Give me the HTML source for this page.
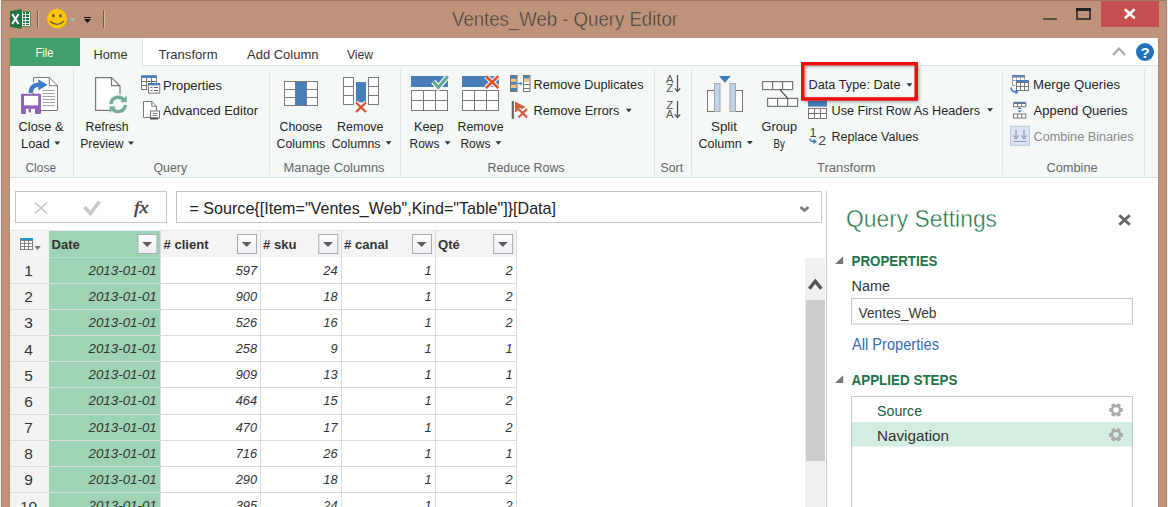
<!DOCTYPE html>
<html><head><meta charset="utf-8"><title>Query Editor</title>
<style>html,body{margin:0;padding:0;width:1168px;height:507px;overflow:hidden;background:#BF9379}
svg{display:block}</style></head>
<body><svg width="1168" height="507" viewBox="0 0 1168 507">
<rect x="0" y="0" width="1168" height="507" fill="#BF9379" />
<rect x="0" y="0" width="1168" height="1" fill="#9C7A64" />
<rect x="0" y="0" width="1" height="507" fill="#F0F0F0" />
<rect x="1" y="0" width="1" height="507" fill="#A8836D" />
<rect x="1166" y="0" width="1" height="507" fill="#A8836D" />
<rect x="1167" y="0" width="1" height="507" fill="#F0F0F0" />
<rect x="9" y="38" width="1" height="469" fill="#AE8A74" />
<rect x="1158" y="38" width="1" height="469" fill="#AE8A74" />
<text x="452.00" y="26.30" font-size="19.48" fill="#3A3A3A" font-weight="normal" font-style="normal" font-family="Liberation Sans" text-anchor="start" textLength="226.00" lengthAdjust="spacingAndGlyphs" stroke="#BF9379" stroke-width="0.5">Ventes_Web - Query Editor</text>
<g>
<rect x="20.5" y="11.5" width="10" height="15" fill="#1F7244"/>
<path d="M22.5 12v14M25.5 12v14M22.5 14.5h7.5M22.5 17.5h7.5M22.5 20.5h7.5M22.5 23.5h7.5M29.5 12v14M22.5 25.5h7.5" stroke="#fff" stroke-width="0.9"/>
<path d="M10 11.2 L21.5 9 L21.5 29 L10 26.8 Z" fill="#1F7244"/>
<path d="M12.2 14 L18.6 24 M18.6 14 L12.2 24" stroke="#fff" stroke-width="2"/>
</g>
<rect x="37" y="10.5" width="1" height="17" fill="#6B5A4E" />
<rect x="38" y="10.5" width="1" height="17" fill="#D2B5A3" />
<circle cx="57" cy="18.7" r="9.9" fill="#FFC700"/><ellipse cx="53.3" cy="15.8" rx="1.2" ry="1.8" fill="#4A4A4A"/><ellipse cx="60.5" cy="15.8" rx="1.2" ry="1.8" fill="#4A4A4A"/><path d="M50 21.3 Q57 27.5 64 21.3" stroke="#555" stroke-width="1.2" fill="none"/>
<path d="M69.8 18.3h5.6l-2.8 3.5z" fill="#8CC7C0"/>
<rect x="84" y="17" width="7" height="1" fill="#111" />
<path d="M84 19h7l-3.5 4z" fill="#111"/>
<rect x="103" y="10.5" width="1" height="17" fill="#6B5A4E" />
<rect x="104" y="10.5" width="1" height="17" fill="#D2B5A3" />
<rect x="1043" y="18" width="14" height="2" fill="#5E5040" />
<rect x="1077" y="9" width="13" height="10" fill="none" stroke="#222" stroke-width="1.5"/><rect x="1076" y="8" width="15" height="3" fill="#222"/>
<rect x="1101" y="1" width="58" height="26" fill="#C74E4E" />
<path d="M1124.8 9.3 L1134.6 18.2 M1134.6 9.3 L1124.8 18.2" stroke="#fff" stroke-width="2.6"/>
<rect x="10" y="38" width="1148" height="28" fill="#FFFFFF" />
<rect x="10" y="65" width="1148" height="1" fill="#D5E4DD" />
<rect x="10" y="38" width="70" height="28" fill="#42A06C" />
<rect x="80" y="38" width="63" height="28" fill="#F4F8F7" />
<rect x="142" y="38" width="1" height="28" fill="#D5E4DD" />
<text x="35.50" y="57.00" font-size="12.94" fill="#FFFFFF" font-weight="normal" font-style="normal" font-family="Liberation Sans" text-anchor="start" textLength="18.00" lengthAdjust="spacingAndGlyphs">File</text>
<text x="93.50" y="58.80" font-size="12.79" fill="#333" font-weight="normal" font-style="normal" font-family="Liberation Sans" text-anchor="start" textLength="34.10" lengthAdjust="spacingAndGlyphs">Home</text>
<text x="158.50" y="58.80" font-size="12.79" fill="#333" font-weight="normal" font-style="normal" font-family="Liberation Sans" text-anchor="start" textLength="59.02" lengthAdjust="spacingAndGlyphs">Transform</text>
<text x="247.00" y="58.80" font-size="12.79" fill="#333" font-weight="normal" font-style="normal" font-family="Liberation Sans" text-anchor="start" textLength="71.52" lengthAdjust="spacingAndGlyphs">Add Column</text>
<text x="347.00" y="58.80" font-size="12.79" fill="#333" font-weight="normal" font-style="normal" font-family="Liberation Sans" text-anchor="start" textLength="26.07" lengthAdjust="spacingAndGlyphs">View</text>
<path d="M1113 55 L1119 48.5 L1125 55" stroke="#A8A8A8" stroke-width="2.2" fill="none"/>
<circle cx="1145" cy="52" r="9" fill="#1E73BE"/><text x="1145" y="57.5" font-size="15" font-weight="bold" fill="#fff" text-anchor="middle" font-family="Liberation Sans">?</text>
<rect x="10" y="66" width="1148" height="112" fill="#F4F8F7" />
<rect x="10" y="177" width="1148" height="1" fill="#D5E4DD" />
<rect x="73" y="70" width="1" height="105" fill="#DDE5E2" />
<rect x="269" y="70" width="1" height="105" fill="#DDE5E2" />
<rect x="400" y="70" width="1" height="105" fill="#DDE5E2" />
<rect x="654" y="70" width="1" height="105" fill="#DDE5E2" />
<rect x="691" y="70" width="1" height="105" fill="#DDE5E2" />
<rect x="1002" y="70" width="1" height="105" fill="#DDE5E2" />
<rect x="1144" y="70" width="1" height="105" fill="#DDE5E2" />
<text x="25.50" y="172.00" font-size="13.08" fill="#666" font-weight="normal" font-style="normal" font-family="Liberation Sans" text-anchor="start" textLength="30.52" lengthAdjust="spacingAndGlyphs">Close</text>
<text x="153.50" y="172.00" font-size="13.08" fill="#666" font-weight="normal" font-style="normal" font-family="Liberation Sans" text-anchor="start" textLength="33.57" lengthAdjust="spacingAndGlyphs">Query</text>
<text x="283.50" y="172.00" font-size="13.08" fill="#666" font-weight="normal" font-style="normal" font-family="Liberation Sans" text-anchor="start" textLength="101.00" lengthAdjust="spacingAndGlyphs">Manage Columns</text>
<text x="487.50" y="172.00" font-size="13.08" fill="#666" font-weight="normal" font-style="normal" font-family="Liberation Sans" text-anchor="start" textLength="77.00" lengthAdjust="spacingAndGlyphs">Reduce Rows</text>
<text x="660.50" y="172.00" font-size="13.08" fill="#666" font-weight="normal" font-style="normal" font-family="Liberation Sans" text-anchor="start" textLength="22.56" lengthAdjust="spacingAndGlyphs">Sort</text>
<text x="817.00" y="172.00" font-size="13.08" fill="#666" font-weight="normal" font-style="normal" font-family="Liberation Sans" text-anchor="start" textLength="58.50" lengthAdjust="spacingAndGlyphs">Transform</text>
<text x="1046.50" y="172.00" font-size="13.08" fill="#666" font-weight="normal" font-style="normal" font-family="Liberation Sans" text-anchor="start" textLength="51.13" lengthAdjust="spacingAndGlyphs">Combine</text>
<text x="18.50" y="131.00" font-size="13.08" fill="#262626" font-weight="normal" font-style="normal" font-family="Liberation Sans" text-anchor="start" textLength="45.05" lengthAdjust="spacingAndGlyphs">Close &amp;</text>
<text x="21.00" y="148.00" font-size="13.08" fill="#262626" font-weight="normal" font-style="normal" font-family="Liberation Sans" text-anchor="start" textLength="28.71" lengthAdjust="spacingAndGlyphs">Load</text>
<path d="M54.400000000000006 141.5h5.8l-2.9 3.5z" fill="#333"/>
<text x="85.50" y="131.00" font-size="13.08" fill="#262626" font-weight="normal" font-style="normal" font-family="Liberation Sans" text-anchor="start" textLength="43.05" lengthAdjust="spacingAndGlyphs">Refresh</text>
<text x="80.20" y="148.00" font-size="13.08" fill="#262626" font-weight="normal" font-style="normal" font-family="Liberation Sans" text-anchor="start" textLength="43.36" lengthAdjust="spacingAndGlyphs">Preview</text>
<path d="M128.1 141.5h5.8l-2.9 3.5z" fill="#333"/>
<text x="279.50" y="131.00" font-size="13.08" fill="#262626" font-weight="normal" font-style="normal" font-family="Liberation Sans" text-anchor="start" textLength="42.53" lengthAdjust="spacingAndGlyphs">Choose</text>
<text x="276.50" y="148.00" font-size="13.08" fill="#262626" font-weight="normal" font-style="normal" font-family="Liberation Sans" text-anchor="start" textLength="48.73" lengthAdjust="spacingAndGlyphs">Columns</text>
<text x="337.00" y="131.00" font-size="13.08" fill="#262626" font-weight="normal" font-style="normal" font-family="Liberation Sans" text-anchor="start" textLength="46.54" lengthAdjust="spacingAndGlyphs">Remove</text>
<text x="331.70" y="148.00" font-size="13.08" fill="#262626" font-weight="normal" font-style="normal" font-family="Liberation Sans" text-anchor="start" textLength="48.81" lengthAdjust="spacingAndGlyphs">Columns</text>
<path d="M385.7 141.3h5.8l-2.9 3.5z" fill="#333"/>
<text x="414.00" y="131.00" font-size="13.08" fill="#262626" font-weight="normal" font-style="normal" font-family="Liberation Sans" text-anchor="start" textLength="29.54" lengthAdjust="spacingAndGlyphs">Keep</text>
<text x="409.60" y="148.00" font-size="13.08" fill="#262626" font-weight="normal" font-style="normal" font-family="Liberation Sans" text-anchor="start" textLength="29.87" lengthAdjust="spacingAndGlyphs">Rows</text>
<path d="M444.7 141.3h5.8l-2.9 3.5z" fill="#333"/>
<text x="457.50" y="131.00" font-size="13.08" fill="#262626" font-weight="normal" font-style="normal" font-family="Liberation Sans" text-anchor="start" textLength="46.00" lengthAdjust="spacingAndGlyphs">Remove</text>
<text x="460.40" y="148.00" font-size="13.08" fill="#262626" font-weight="normal" font-style="normal" font-family="Liberation Sans" text-anchor="start" textLength="30.03" lengthAdjust="spacingAndGlyphs">Rows</text>
<path d="M495.5 141.3h5.8l-2.9 3.5z" fill="#333"/>
<text x="711.00" y="131.00" font-size="13.08" fill="#262626" font-weight="normal" font-style="normal" font-family="Liberation Sans" text-anchor="start" textLength="26.05" lengthAdjust="spacingAndGlyphs">Split</text>
<text x="698.40" y="148.00" font-size="13.08" fill="#262626" font-weight="normal" font-style="normal" font-family="Liberation Sans" text-anchor="start" textLength="43.26" lengthAdjust="spacingAndGlyphs">Column</text>
<path d="M747.0 141.0h5.8l-2.9 3.5z" fill="#333"/>
<text x="761.50" y="131.00" font-size="13.08" fill="#262626" font-weight="normal" font-style="normal" font-family="Liberation Sans" text-anchor="start" textLength="35.53" lengthAdjust="spacingAndGlyphs">Group</text>
<text x="773.50" y="148.00" font-size="13.08" fill="#262626" font-weight="normal" font-style="normal" font-family="Liberation Sans" text-anchor="start" textLength="11.36" lengthAdjust="spacingAndGlyphs">By</text>
<text x="163.00" y="89.50" font-size="13.08" fill="#262626" font-weight="normal" font-style="normal" font-family="Liberation Sans" text-anchor="start" textLength="59.01" lengthAdjust="spacingAndGlyphs">Properties</text>
<text x="163.00" y="115.20" font-size="13.08" fill="#262626" font-weight="normal" font-style="normal" font-family="Liberation Sans" text-anchor="start" textLength="95.02" lengthAdjust="spacingAndGlyphs">Advanced Editor</text>
<text x="533.50" y="88.80" font-size="13.08" fill="#262626" font-weight="normal" font-style="normal" font-family="Liberation Sans" text-anchor="start" textLength="110.00" lengthAdjust="spacingAndGlyphs">Remove Duplicates</text>
<text x="533.50" y="114.50" font-size="13.08" fill="#262626" font-weight="normal" font-style="normal" font-family="Liberation Sans" text-anchor="start" textLength="86.02" lengthAdjust="spacingAndGlyphs">Remove Errors</text>
<path d="M625.9000000000001 108.7h5.8l-2.9 3.5z" fill="#333"/>
<text x="808.50" y="88.60" font-size="13.08" fill="#262626" font-weight="normal" font-style="normal" font-family="Liberation Sans" text-anchor="start" textLength="92.01" lengthAdjust="spacingAndGlyphs">Data Type: Date</text>
<path d="M906.5 83.3h5.8l-2.9 3.5z" fill="#333"/>
<text x="831.50" y="114.60" font-size="13.08" fill="#262626" font-weight="normal" font-style="normal" font-family="Liberation Sans" text-anchor="start" textLength="148.50" lengthAdjust="spacingAndGlyphs">Use First Row As Headers</text>
<path d="M987.2 108.3h5.8l-2.9 3.5z" fill="#333"/>
<text x="831.50" y="140.50" font-size="13.08" fill="#262626" font-weight="normal" font-style="normal" font-family="Liberation Sans" text-anchor="start" textLength="87.02" lengthAdjust="spacingAndGlyphs">Replace Values</text>
<text x="1033.00" y="89.10" font-size="13.08" fill="#262626" font-weight="normal" font-style="normal" font-family="Liberation Sans" text-anchor="start" textLength="87.03" lengthAdjust="spacingAndGlyphs">Merge Queries</text>
<text x="1033.50" y="114.80" font-size="13.08" fill="#262626" font-weight="normal" font-style="normal" font-family="Liberation Sans" text-anchor="start" textLength="94.01" lengthAdjust="spacingAndGlyphs">Append Queries</text>
<text x="1033.50" y="140.60" font-size="13.08" fill="#8A8A8A" font-weight="normal" font-style="normal" font-family="Liberation Sans" text-anchor="start" textLength="100.00" lengthAdjust="spacingAndGlyphs">Combine Binaries</text>
<rect x="10" y="178" width="1148" height="329" fill="#FFFFFF" />
<rect x="15.5" y="191.5" width="151" height="31" fill="#fff" stroke="#C6C6C6"/>
<rect x="176.5" y="191.5" width="645" height="31" fill="#fff" stroke="#C6C6C6"/>
<path d="M35 202.5 L47 213.5 M47 202.5 L35 213.5" stroke="#C4C4C4" stroke-width="1.5"/>
<path d="M84.5 207 L90.5 213.5 L99.5 201.5" stroke="#C8C8C8" stroke-width="3.5" fill="none"/>
<text x="134.00" y="213.00" font-size="16.00" fill="#3C3C3C" font-weight="normal" font-style="italic" font-family="Liberation Serif" text-anchor="start" textLength="14.40" lengthAdjust="spacingAndGlyphs" stroke="#3C3C3C" stroke-width="0.35">fx</text>
<text x="189.50" y="214.00" font-size="15.70" fill="#222" font-weight="normal" font-style="normal" font-family="Liberation Sans" text-anchor="start" textLength="366.50" lengthAdjust="spacingAndGlyphs">= Source{[Item=&quot;Ventes_Web&quot;,Kind=&quot;Table&quot;]}[Data]</text>
<path d="M800.5 207 L804.5 210.5 L808.5 207" stroke="#777" stroke-width="2.5" fill="none"/>
<rect x="826" y="191" width="1" height="316" fill="#C8C8C8" />
<rect x="10" y="230" width="506" height="27" fill="#F4F4F4" />
<rect x="49" y="230" width="111" height="277" fill="#9ED4B5" />
<rect x="10" y="257" width="39" height="250" fill="#F3F3F3" />
<rect x="10" y="230" width="506" height="1" fill="#E6E6E6" />
<rect x="160" y="230" width="1" height="277" fill="#DCDCDC" />
<rect x="260" y="230" width="1" height="277" fill="#DCDCDC" />
<rect x="341" y="230" width="1" height="277" fill="#DCDCDC" />
<rect x="435" y="230" width="1" height="277" fill="#DCDCDC" />
<rect x="516" y="230" width="1" height="277" fill="#DCDCDC" />
<rect x="516" y="230" width="1" height="277" fill="#DCDCDC" />
<rect x="10" y="283" width="506" height="1" fill="#DCDCDC" />
<text x="28.50" y="276.00" font-size="15.50" fill="#333" font-weight="normal" font-style="normal" font-family="Liberation Sans" text-anchor="middle">1</text>
<text x="156.80" y="274.50" font-size="12.79" fill="#333" font-weight="normal" font-style="italic" font-family="Liberation Sans" text-anchor="end" textLength="68.30" lengthAdjust="spacingAndGlyphs">2013-01-01</text>
<text x="257.00" y="274.50" font-size="12.79" fill="#333" font-weight="normal" font-style="italic" font-family="Liberation Sans" text-anchor="end">597</text>
<text x="337.50" y="274.50" font-size="12.79" fill="#333" font-weight="normal" font-style="italic" font-family="Liberation Sans" text-anchor="end">24</text>
<text x="431.50" y="274.50" font-size="12.79" fill="#333" font-weight="normal" font-style="italic" font-family="Liberation Sans" text-anchor="end">1</text>
<text x="512.50" y="274.50" font-size="12.79" fill="#333" font-weight="normal" font-style="italic" font-family="Liberation Sans" text-anchor="end">2</text>
<rect x="10" y="309" width="506" height="1" fill="#DCDCDC" />
<text x="28.50" y="302.17" font-size="15.50" fill="#333" font-weight="normal" font-style="normal" font-family="Liberation Sans" text-anchor="middle">2</text>
<text x="156.80" y="300.67" font-size="12.79" fill="#333" font-weight="normal" font-style="italic" font-family="Liberation Sans" text-anchor="end" textLength="68.30" lengthAdjust="spacingAndGlyphs">2013-01-01</text>
<text x="257.00" y="300.67" font-size="12.79" fill="#333" font-weight="normal" font-style="italic" font-family="Liberation Sans" text-anchor="end">900</text>
<text x="337.50" y="300.67" font-size="12.79" fill="#333" font-weight="normal" font-style="italic" font-family="Liberation Sans" text-anchor="end">18</text>
<text x="431.50" y="300.67" font-size="12.79" fill="#333" font-weight="normal" font-style="italic" font-family="Liberation Sans" text-anchor="end">1</text>
<text x="512.50" y="300.67" font-size="12.79" fill="#333" font-weight="normal" font-style="italic" font-family="Liberation Sans" text-anchor="end">2</text>
<rect x="10" y="335" width="506" height="1" fill="#DCDCDC" />
<text x="28.50" y="328.34" font-size="15.50" fill="#333" font-weight="normal" font-style="normal" font-family="Liberation Sans" text-anchor="middle">3</text>
<text x="156.80" y="326.84" font-size="12.79" fill="#333" font-weight="normal" font-style="italic" font-family="Liberation Sans" text-anchor="end" textLength="68.30" lengthAdjust="spacingAndGlyphs">2013-01-01</text>
<text x="257.00" y="326.84" font-size="12.79" fill="#333" font-weight="normal" font-style="italic" font-family="Liberation Sans" text-anchor="end">526</text>
<text x="337.50" y="326.84" font-size="12.79" fill="#333" font-weight="normal" font-style="italic" font-family="Liberation Sans" text-anchor="end">16</text>
<text x="431.50" y="326.84" font-size="12.79" fill="#333" font-weight="normal" font-style="italic" font-family="Liberation Sans" text-anchor="end">1</text>
<text x="512.50" y="326.84" font-size="12.79" fill="#333" font-weight="normal" font-style="italic" font-family="Liberation Sans" text-anchor="end">2</text>
<rect x="10" y="361" width="506" height="1" fill="#DCDCDC" />
<text x="28.50" y="354.51" font-size="15.50" fill="#333" font-weight="normal" font-style="normal" font-family="Liberation Sans" text-anchor="middle">4</text>
<text x="156.80" y="353.01" font-size="12.79" fill="#333" font-weight="normal" font-style="italic" font-family="Liberation Sans" text-anchor="end" textLength="68.30" lengthAdjust="spacingAndGlyphs">2013-01-01</text>
<text x="257.00" y="353.01" font-size="12.79" fill="#333" font-weight="normal" font-style="italic" font-family="Liberation Sans" text-anchor="end">258</text>
<text x="337.50" y="353.01" font-size="12.79" fill="#333" font-weight="normal" font-style="italic" font-family="Liberation Sans" text-anchor="end">9</text>
<text x="431.50" y="353.01" font-size="12.79" fill="#333" font-weight="normal" font-style="italic" font-family="Liberation Sans" text-anchor="end">1</text>
<text x="512.50" y="353.01" font-size="12.79" fill="#333" font-weight="normal" font-style="italic" font-family="Liberation Sans" text-anchor="end">1</text>
<rect x="10" y="387" width="506" height="1" fill="#DCDCDC" />
<text x="28.50" y="380.68" font-size="15.50" fill="#333" font-weight="normal" font-style="normal" font-family="Liberation Sans" text-anchor="middle">5</text>
<text x="156.80" y="379.18" font-size="12.79" fill="#333" font-weight="normal" font-style="italic" font-family="Liberation Sans" text-anchor="end" textLength="68.30" lengthAdjust="spacingAndGlyphs">2013-01-01</text>
<text x="257.00" y="379.18" font-size="12.79" fill="#333" font-weight="normal" font-style="italic" font-family="Liberation Sans" text-anchor="end">909</text>
<text x="337.50" y="379.18" font-size="12.79" fill="#333" font-weight="normal" font-style="italic" font-family="Liberation Sans" text-anchor="end">13</text>
<text x="431.50" y="379.18" font-size="12.79" fill="#333" font-weight="normal" font-style="italic" font-family="Liberation Sans" text-anchor="end">1</text>
<text x="512.50" y="379.18" font-size="12.79" fill="#333" font-weight="normal" font-style="italic" font-family="Liberation Sans" text-anchor="end">1</text>
<rect x="10" y="414" width="506" height="1" fill="#DCDCDC" />
<text x="28.50" y="406.85" font-size="15.50" fill="#333" font-weight="normal" font-style="normal" font-family="Liberation Sans" text-anchor="middle">6</text>
<text x="156.80" y="405.35" font-size="12.79" fill="#333" font-weight="normal" font-style="italic" font-family="Liberation Sans" text-anchor="end" textLength="68.30" lengthAdjust="spacingAndGlyphs">2013-01-01</text>
<text x="257.00" y="405.35" font-size="12.79" fill="#333" font-weight="normal" font-style="italic" font-family="Liberation Sans" text-anchor="end">464</text>
<text x="337.50" y="405.35" font-size="12.79" fill="#333" font-weight="normal" font-style="italic" font-family="Liberation Sans" text-anchor="end">15</text>
<text x="431.50" y="405.35" font-size="12.79" fill="#333" font-weight="normal" font-style="italic" font-family="Liberation Sans" text-anchor="end">1</text>
<text x="512.50" y="405.35" font-size="12.79" fill="#333" font-weight="normal" font-style="italic" font-family="Liberation Sans" text-anchor="end">2</text>
<rect x="10" y="440" width="506" height="1" fill="#DCDCDC" />
<text x="28.50" y="433.02" font-size="15.50" fill="#333" font-weight="normal" font-style="normal" font-family="Liberation Sans" text-anchor="middle">7</text>
<text x="156.80" y="431.52" font-size="12.79" fill="#333" font-weight="normal" font-style="italic" font-family="Liberation Sans" text-anchor="end" textLength="68.30" lengthAdjust="spacingAndGlyphs">2013-01-01</text>
<text x="257.00" y="431.52" font-size="12.79" fill="#333" font-weight="normal" font-style="italic" font-family="Liberation Sans" text-anchor="end">470</text>
<text x="337.50" y="431.52" font-size="12.79" fill="#333" font-weight="normal" font-style="italic" font-family="Liberation Sans" text-anchor="end">17</text>
<text x="431.50" y="431.52" font-size="12.79" fill="#333" font-weight="normal" font-style="italic" font-family="Liberation Sans" text-anchor="end">1</text>
<text x="512.50" y="431.52" font-size="12.79" fill="#333" font-weight="normal" font-style="italic" font-family="Liberation Sans" text-anchor="end">2</text>
<rect x="10" y="466" width="506" height="1" fill="#DCDCDC" />
<text x="28.50" y="459.19" font-size="15.50" fill="#333" font-weight="normal" font-style="normal" font-family="Liberation Sans" text-anchor="middle">8</text>
<text x="156.80" y="457.69" font-size="12.79" fill="#333" font-weight="normal" font-style="italic" font-family="Liberation Sans" text-anchor="end" textLength="68.30" lengthAdjust="spacingAndGlyphs">2013-01-01</text>
<text x="257.00" y="457.69" font-size="12.79" fill="#333" font-weight="normal" font-style="italic" font-family="Liberation Sans" text-anchor="end">716</text>
<text x="337.50" y="457.69" font-size="12.79" fill="#333" font-weight="normal" font-style="italic" font-family="Liberation Sans" text-anchor="end">26</text>
<text x="431.50" y="457.69" font-size="12.79" fill="#333" font-weight="normal" font-style="italic" font-family="Liberation Sans" text-anchor="end">1</text>
<text x="512.50" y="457.69" font-size="12.79" fill="#333" font-weight="normal" font-style="italic" font-family="Liberation Sans" text-anchor="end">1</text>
<rect x="10" y="492" width="506" height="1" fill="#DCDCDC" />
<text x="28.50" y="485.36" font-size="15.50" fill="#333" font-weight="normal" font-style="normal" font-family="Liberation Sans" text-anchor="middle">9</text>
<text x="156.80" y="483.86" font-size="12.79" fill="#333" font-weight="normal" font-style="italic" font-family="Liberation Sans" text-anchor="end" textLength="68.30" lengthAdjust="spacingAndGlyphs">2013-01-01</text>
<text x="257.00" y="483.86" font-size="12.79" fill="#333" font-weight="normal" font-style="italic" font-family="Liberation Sans" text-anchor="end">290</text>
<text x="337.50" y="483.86" font-size="12.79" fill="#333" font-weight="normal" font-style="italic" font-family="Liberation Sans" text-anchor="end">18</text>
<text x="431.50" y="483.86" font-size="12.79" fill="#333" font-weight="normal" font-style="italic" font-family="Liberation Sans" text-anchor="end">1</text>
<text x="512.50" y="483.86" font-size="12.79" fill="#333" font-weight="normal" font-style="italic" font-family="Liberation Sans" text-anchor="end">2</text>
<text x="28.50" y="511.53" font-size="15.50" fill="#333" font-weight="normal" font-style="normal" font-family="Liberation Sans" text-anchor="middle">10</text>
<text x="156.80" y="510.03" font-size="12.79" fill="#333" font-weight="normal" font-style="italic" font-family="Liberation Sans" text-anchor="end" textLength="68.30" lengthAdjust="spacingAndGlyphs">2013-01-01</text>
<text x="257.00" y="510.03" font-size="12.79" fill="#333" font-weight="normal" font-style="italic" font-family="Liberation Sans" text-anchor="end">395</text>
<text x="337.50" y="510.03" font-size="12.79" fill="#333" font-weight="normal" font-style="italic" font-family="Liberation Sans" text-anchor="end">24</text>
<text x="431.50" y="510.03" font-size="12.79" fill="#333" font-weight="normal" font-style="italic" font-family="Liberation Sans" text-anchor="end">1</text>
<text x="512.50" y="510.03" font-size="12.79" fill="#333" font-weight="normal" font-style="italic" font-family="Liberation Sans" text-anchor="end">2</text>
<defs><linearGradient id="fb" x1="0" y1="0" x2="0" y2="1"><stop offset="0" stop-color="#FFFFFF"/><stop offset="1" stop-color="#ECEFF5"/></linearGradient></defs>
<rect x="49" y="257" width="111" height="1" fill="#B4DEC6" />
<text x="51.50" y="249.00" font-size="13.08" fill="#333" font-weight="bold" font-style="normal" font-family="Liberation Sans" text-anchor="start">Date</text>
<rect x="138.0" y="234.5" width="19" height="19" fill="url(#fb)" stroke="#A9A9B5"/>
<path d="M142.3 242.1h9.8l-4.9 5z" fill="#5E5E5E"/>
<text x="163.50" y="249.00" font-size="13.08" fill="#333" font-weight="bold" font-style="normal" font-family="Liberation Sans" text-anchor="start"># client</text>
<rect x="237.5" y="234.5" width="19" height="19" fill="url(#fb)" stroke="#A9A9B5"/>
<path d="M241.8 242.1h9.8l-4.9 5z" fill="#5E5E5E"/>
<text x="263.00" y="249.00" font-size="13.08" fill="#333" font-weight="bold" font-style="normal" font-family="Liberation Sans" text-anchor="start"># sku</text>
<rect x="318.8" y="234.5" width="19" height="19" fill="url(#fb)" stroke="#A9A9B5"/>
<path d="M323.1 242.1h9.8l-4.9 5z" fill="#5E5E5E"/>
<text x="344.00" y="249.00" font-size="13.08" fill="#333" font-weight="bold" font-style="normal" font-family="Liberation Sans" text-anchor="start"># canal</text>
<rect x="412.5" y="234.5" width="19" height="19" fill="url(#fb)" stroke="#A9A9B5"/>
<path d="M416.8 242.1h9.8l-4.9 5z" fill="#5E5E5E"/>
<text x="438.00" y="249.00" font-size="13.08" fill="#333" font-weight="bold" font-style="normal" font-family="Liberation Sans" text-anchor="start">Qté</text>
<rect x="493.7" y="234.5" width="19" height="19" fill="url(#fb)" stroke="#A9A9B5"/>
<path d="M498.0 242.1h9.8l-4.9 5z" fill="#5E5E5E"/>
<g><rect x="20" y="238" width="13" height="2.3" fill="#1E96C8"/><rect x="20.5" y="240.5" width="12" height="9" fill="#fff" stroke="#808080"/><path d="M24.5 240.5v9M28.5 240.5v9M20.5 243.5h12M20.5 246.5h12" stroke="#808080"/><path d="M34.3 246h6.5l-3.25 3.9z" fill="#777"/></g>
<rect x="805" y="258" width="20" height="249" fill="#F0F0F0" />
<rect x="806" y="300" width="19" height="161" fill="#CDCDCD" />
<path d="M809.3 288.8 L815.3 281.3 L821.3 288.8" stroke="#555" stroke-width="3.4" fill="none"/>
<text x="846.00" y="226.50" font-size="24.00" fill="#217346" font-weight="normal" font-style="normal" font-family="Liberation Sans" text-anchor="start" textLength="151.00" lengthAdjust="spacingAndGlyphs" stroke="#fff" stroke-width="0.45">Query Settings</text>
<path d="M1119.3 215.2 L1129.8 224.8 M1129.8 215.2 L1119.3 224.8" stroke="#636363" stroke-width="2.9"/>
<path d="M843.2 256.2 V264 H835 Z" fill="#777"/>
<text x="851.50" y="266.00" font-size="14.97" fill="#217346" font-weight="bold" font-style="normal" font-family="Liberation Sans" text-anchor="start" textLength="86.01" lengthAdjust="spacingAndGlyphs">PROPERTIES</text>
<text x="851.50" y="291.00" font-size="15.26" fill="#333" font-weight="normal" font-style="normal" font-family="Liberation Sans" text-anchor="start" textLength="38.50" lengthAdjust="spacingAndGlyphs">Name</text>
<rect x="851.5" y="298.5" width="281" height="25.5" fill="#fff" stroke="#C6C6C6"/>
<text x="858.50" y="318.00" font-size="15.26" fill="#3A3A3A" font-weight="normal" font-style="normal" font-family="Liberation Sans" text-anchor="start" textLength="78.02" lengthAdjust="spacingAndGlyphs">Ventes_Web</text>
<text x="852.00" y="349.80" font-size="15.70" fill="#3B6CB2" font-weight="normal" font-style="normal" font-family="Liberation Sans" text-anchor="start" textLength="87.01" lengthAdjust="spacingAndGlyphs">All Properties</text>
<path d="M843.2 375.2 V383 H835 Z" fill="#777"/>
<text x="851.50" y="385.00" font-size="14.97" fill="#217346" font-weight="bold" font-style="normal" font-family="Liberation Sans" text-anchor="start" textLength="106.00" lengthAdjust="spacingAndGlyphs">APPLIED STEPS</text>
<rect x="851.5" y="396.5" width="281" height="120" fill="#fff" stroke="#C6C6C6"/>
<rect x="852" y="422" width="280" height="24.5" fill="#D3EDE0" />
<text x="877.00" y="416.20" font-size="15.26" fill="#1B603B" font-weight="normal" font-style="normal" font-family="Liberation Sans" text-anchor="start" textLength="45.05" lengthAdjust="spacingAndGlyphs">Source</text>
<text x="877.00" y="441.00" font-size="15.26" fill="#333" font-weight="normal" font-style="normal" font-family="Liberation Sans" text-anchor="start" textLength="72.03" lengthAdjust="spacingAndGlyphs">Navigation</text>
<polygon points="1120.41,412.35 1122.92,411.60 1122.92,408.40 1120.41,407.65 1120.24,407.35 1120.84,404.81 1118.08,403.21 1116.17,405.00 1115.83,405.00 1113.92,403.21 1111.16,404.81 1111.76,407.35 1111.59,407.65 1109.08,408.40 1109.08,411.60 1111.59,412.35 1111.76,412.65 1111.16,415.19 1113.92,416.79 1115.83,415.00 1116.17,415.00 1118.08,416.79 1120.84,415.19 1120.24,412.65" fill="#ABABAB"/><circle cx="1116" cy="410" r="2.7" fill="#fff"/>
<polygon points="1120.41,437.15 1122.92,436.40 1122.92,433.20 1120.41,432.45 1120.24,432.15 1120.84,429.61 1118.08,428.01 1116.17,429.80 1115.83,429.80 1113.92,428.01 1111.16,429.61 1111.76,432.15 1111.59,432.45 1109.08,433.20 1109.08,436.40 1111.59,437.15 1111.76,437.45 1111.16,439.99 1113.92,441.59 1115.83,439.80 1116.17,439.80 1118.08,441.59 1120.84,439.99 1120.24,437.45" fill="#ABABAB"/><circle cx="1116" cy="434.8" r="2.7" fill="#D3EDE0"/>
<!-- Close & Load -->
<g>
<path d="M33.5 77.5 H49.3 L57.5 85.7 V110.5 H33.5 Z" fill="#fff" stroke="#7A7A7A" stroke-width="1"/>
<path d="M49.3 77.5 V85.7 H57.5" fill="none" stroke="#7A7A7A" stroke-width="1"/>
<path d="M42.5 90.5h12.5M42.5 93.5h12.5M42.5 96.5h12.5M42.5 99.5h12.5M42.5 102.5h12.5M42.5 105.5h12.5" stroke="#A5A5A5" stroke-width="1"/>
<path d="M30.8 93 C30.8 87.5 33.5 84.6 39.5 84.6" fill="none" stroke="#fff" stroke-width="6.5"/>
<path d="M38 78 L49 84.7 L38 91.8 Z" fill="#fff"/>
<path d="M30.8 93 C30.8 87.5 33.5 84.6 39.5 84.6" fill="none" stroke="#3F7BC0" stroke-width="4.2"/>
<path d="M38.3 79.5 L47.6 84.7 L38.3 90.5 Z" fill="#3F7BC0"/>
<rect x="21" y="93.8" width="20" height="20.2" rx="1.2" fill="#9061B7"/>
<rect x="24" y="95.8" width="14.2" height="9.6" fill="#fff"/>
<rect x="25.8" y="108.8" width="9.2" height="5.2" fill="#fff"/>
<rect x="28.7" y="108.8" width="2.3" height="3.6" fill="#9061B7"/>
</g>
<!-- Refresh Preview -->
<g>
<path d="M95.6 77.6 H111.5 L120 86 V110.4 H95.6 Z" fill="#fff" stroke="#777" stroke-width="1.2"/>
<path d="M111.5 77.6 V85.7 H120" fill="none" stroke="#777" stroke-width="1.2"/>
<circle cx="118.2" cy="104.5" r="10.5" fill="#F4F8F7"/>
<path d="M111 104 A7.2 7.2 0 0 1 124.5 101" fill="none" stroke="#72AC96" stroke-width="3.4"/>
<path d="M120.3 102.3 L126.8 102.3 L126.8 95.5 Z" fill="#72AC96"/>
<path d="M125.4 105 A7.2 7.2 0 0 1 112 108" fill="none" stroke="#72AC96" stroke-width="3.4"/>
<path d="M109.5 106.5 L116 106.5 L109.5 113 Z" fill="#72AC96"/>
</g>
<!-- Properties -->
<g>
<rect x="141" y="75.2" width="16" height="2.8" fill="#4A7EBB"/>
<path d="M141.5 78 V89.5 H156.5 V78" fill="#fff" stroke="#777"/>
<path d="M146.5 78v11.5M151.5 78v11.5M141.5 81.5h15M141.5 85.5h15" stroke="#777"/>
<rect x="147.5" y="83" width="12.7" height="10.7" fill="#F4F8F7"/>
<rect x="148" y="83" width="12.2" height="2.6" fill="#4A7EBB"/>
<path d="M148.5 85.6 V93.2 H159.7 V85.6" fill="#fff" stroke="#777"/>
<path d="M150.5 87.5h2M154 87.5h4M150.5 90.5h2M154 90.5h4" stroke="#666" stroke-width="1.2"/>
</g>
<!-- Advanced Editor -->
<g>
<path d="M143.5 101.5 H151.8 L156.5 106.2 V117.5 H143.5 Z" fill="#fff" stroke="#777"/>
<path d="M151.8 101.5 V106.2 H156.5" fill="none" stroke="#777"/>
<rect x="150.5" y="111" width="9" height="7" fill="#fff" stroke="#777"/>
<path d="M152.5 113.5h5M152.5 115.5h5" stroke="#888"/>
<rect x="150" y="117.5" width="8" height="2" fill="#555"/>
</g>
<!-- Choose Columns -->
<g>
<rect x="284.5" y="81.5" width="33" height="24" fill="#fff" stroke="#7A7A7A"/>
<rect x="295.5" y="81.5" width="11" height="24" fill="#4A7EBB" stroke="#7A7A7A"/>
<path d="M284.5 89.5h11M306.5 89.5h11M284.5 97.5h11M306.5 97.5h11" stroke="#7A7A7A"/>
</g>
<!-- Remove Columns -->
<g>
<rect x="343.5" y="77.5" width="10" height="27" fill="#fff" stroke="#7A7A7A"/>
<path d="M343.5 86.5h10M343.5 95.5h10" stroke="#7A7A7A"/>
<rect x="368.5" y="77.5" width="10" height="27" fill="#fff" stroke="#7A7A7A"/>
<path d="M368.5 86.5h10M368.5 95.5h10" stroke="#7A7A7A"/>
<rect x="356" y="82" width="10" height="20.5" fill="#4A7EBB"/>
<path d="M356 102.5 L366 112 M366 102.5 L356 112" stroke="#F4F8F7" stroke-width="4.5"/>
<path d="M356 102.5 L366 112 M366 102.5 L356 112" stroke="#D9532E" stroke-width="2.4"/>
</g>
<!-- Keep Rows -->
<g>
<rect x="411" y="76" width="37" height="11" fill="#4A7EBB"/>
<rect x="411.5" y="90.5" width="36" height="20" fill="#fff" stroke="#7A7A7A"/>
<path d="M423.5 90.5v20M435.5 90.5v20M411.5 100.5h36" stroke="#7A7A7A"/>
<path d="M433.3 81.5 L438.3 87.5 L447.8 76.3" fill="none" stroke="#F4F8F7" stroke-width="5.5"/>
<path d="M433.3 81.5 L438.3 87.5 L447.8 76.3" fill="none" stroke="#5FA88A" stroke-width="3"/>
</g>
<!-- Remove Rows -->
<g>
<rect x="462" y="76" width="37" height="11" fill="#4A7EBB"/>
<rect x="462.5" y="90.5" width="36" height="20" fill="#fff" stroke="#7A7A7A"/>
<path d="M474.5 90.5v20M486.5 90.5v20M462.5 100.5h36" stroke="#7A7A7A"/>
<path d="M486 76.3 L498.3 88 M498.3 76.3 L486 88" stroke="#F4F8F7" stroke-width="5"/>
<path d="M486 76.3 L498.3 88 M498.3 76.3 L486 88" stroke="#D9532E" stroke-width="2.6"/>
</g>
<!-- Remove Duplicates -->
<g>
<rect x="510.5" y="75.5" width="6.5" height="16" fill="#4A7EBB" stroke="#777"/>
<rect x="511" y="78.7" width="5.5" height="3.2" fill="#F1C37D"/>
<rect x="511" y="84.6" width="5.5" height="3.4" fill="#F1C37D"/>
<rect x="523.5" y="75.5" width="6.5" height="16" fill="#fff" stroke="#777"/>
<rect x="524" y="76" width="5.5" height="2.7" fill="#4A7EBB"/>
<rect x="524" y="78.7" width="5.5" height="3.2" fill="#F1C37D"/>
<path d="M523.5 84.5h6.5M523.5 88.5h6.5" stroke="#777"/>
<path d="M518 83.5h3.5" stroke="#4A7EBB" stroke-width="1.3"/><path d="M520.5 81.5 L522.5 83.5 L520.5 85.5Z" fill="#4A7EBB"/>
</g>
<!-- Remove Errors -->
<g>
<rect x="511.7" y="101.1" width="2.2" height="17.8" fill="#666"/>
<path d="M515 101.6 L525.5 107 L515 112.3 Z" fill="#DA5A36"/>
<path d="M518.5 109 L527 117.5 M527 109 L518.5 117.5" stroke="#F4F8F7" stroke-width="4"/>
<path d="M518.5 109 L527 117.5 M527 109 L518.5 117.5" stroke="#DA5A36" stroke-width="2.2"/>
</g>
<!-- Sort -->
<g fill="#555" font-family="Liberation Sans" font-size="11">
<text x="666" y="82.8" textLength="7.5" lengthAdjust="spacingAndGlyphs">A</text>
<text x="666.3" y="91.8" textLength="7" lengthAdjust="spacingAndGlyphs">Z</text>
<text x="666.3" y="108.6" textLength="7" lengthAdjust="spacingAndGlyphs">Z</text>
<text x="666" y="118" textLength="7.5" lengthAdjust="spacingAndGlyphs">A</text>
</g>
<path d="M677.5 75v16M674.8 88.3 L677.5 91.5 L680.2 88.3M677.5 101v16M674.8 114.3 L677.5 117.5 L680.2 114.3" stroke="#555" stroke-width="1.3" fill="none"/>
<!-- Split Column -->
<g>
<rect x="707.5" y="90.5" width="7" height="21" fill="#fff" stroke="#777"/>
<rect x="735.5" y="90.5" width="7" height="21" fill="#fff" stroke="#777"/>
<rect x="714.5" y="83.5" width="5.5" height="28" fill="#C0D3EA" stroke="#A8A8A8"/>
<rect x="730" y="83.5" width="5.5" height="28" fill="#C0D3EA" stroke="#A8A8A8"/>
<path d="M719 75.9 H730.8 L724.9 82.7 Z" fill="#3F79B8"/>
</g>
<!-- Group By -->
<g fill="#fff" stroke="#777" stroke-width="1.2">
<rect x="762.6" y="81.6" width="30" height="8"/>
<path d="M772.6 81.6v8M782.6 81.6v8" fill="none"/>
<rect x="767.6" y="98.4" width="30" height="8"/>
<path d="M777.6 98.4v8M787.6 98.4v8" fill="none"/>
<path d="M780 89.6 L787.8 98.4" fill="none" stroke="#444"/>
</g>
<!-- Use First Row As Headers -->
<g>
<rect x="808" y="100.8" width="19" height="5.8" fill="#4A7EBB"/>
<rect x="808.5" y="108.5" width="18" height="10" fill="#fff" stroke="#777"/>
<path d="M814.5 108.5v10M820.5 108.5v10M808.5 113.5h18" stroke="#777"/>
</g>
<!-- Replace Values -->
<g fill="#444" font-family="Liberation Sans">
<text x="809.5" y="136.6" font-size="13.5" textLength="7" lengthAdjust="spacingAndGlyphs">1</text>
<text x="818.3" y="144.8" font-size="13.5" textLength="7.8" lengthAdjust="spacingAndGlyphs">2</text>
</g>
<path d="M810 138.5 Q810 141.5 814 141.5" fill="none" stroke="#3F7BC0" stroke-width="1.6"/>
<path d="M813.5 138.8 L817 141.5 L813.5 144.2Z" fill="#3F7BC0"/>
<!-- Merge Queries -->
<g>
<rect x="1012" y="75" width="13" height="2.2" fill="#4A7EBB"/>
<rect x="1012.5" y="77.2" width="12" height="8.3" fill="#fff" stroke="#999"/>
<path d="M1016.5 77.2v8.3M1020.5 77.2v8.3M1012.5 80.5h12" stroke="#999"/>
<rect x="1015.5" y="79.5" width="14" height="12" fill="#F4F8F7"/>
<rect x="1016" y="80" width="13" height="2.5" fill="#4A7EBB"/>
<rect x="1016.5" y="82.5" width="12" height="8" fill="#fff" stroke="#777"/>
<path d="M1020.5 82.5v8M1024.5 82.5v8M1016.5 86.5h12" stroke="#777"/>
<path d="M1011 87.5 Q1011.5 92 1016 92" fill="none" stroke="#3F7BC0" stroke-width="1.6"/>
<path d="M1015.5 89.5 L1018.5 92 L1015.5 94.5Z" fill="#3F7BC0"/>
</g>
<!-- Append Queries -->
<g>
<rect x="1013.5" y="101.8" width="12.3" height="2" fill="#4A7EBB"/>
<rect x="1013.5" y="103.5" width="12.3" height="3.2" fill="#fff" stroke="#777"/>
<path d="M1017.6 103.5v3.2M1021.7 103.5v3.2" stroke="#777"/>
<path d="M1017.5 109 L1019.6 107 L1021.7 109Z M1017.5 110.5 L1019.6 112.5 L1021.7 110.5Z" fill="#3F7BC0"/>
<rect x="1013.5" y="114" width="12.3" height="4" fill="#fff" stroke="#777"/>
<path d="M1017.6 114v4M1021.7 114v4" stroke="#777"/>
</g>
<!-- Combine Binaries -->
<g>
<rect x="1010.5" y="126.3" width="19" height="19" fill="#DCE5F1" stroke="#B9C9E0"/>
<path d="M1016 130v8M1024 130v8M1013.5 141.5h13" stroke="#8A9CB8" stroke-width="1.2"/>
<path d="M1013.6 135.5 L1016 138.8 L1018.4 135.5M1021.6 135.5 L1024 138.8 L1026.4 135.5" fill="none" stroke="#8A9CB8" stroke-width="1.2"/>
</g>

<defs><filter id="bl" x="-20%" y="-20%" width="140%" height="140%"><feGaussianBlur stdDeviation="1.6"/></filter><linearGradient id="gt" x1="0" y1="0" x2="0" y2="1"><stop offset="0" stop-color="#000" stop-opacity="0.22"/><stop offset="1" stop-color="#000" stop-opacity="0"/></linearGradient><linearGradient id="gl" x1="0" y1="0" x2="1" y2="0"><stop offset="0" stop-color="#000" stop-opacity="0.22"/><stop offset="1" stop-color="#000" stop-opacity="0"/></linearGradient></defs><path d="M919.5 65 V102.5 H804 V98 H915.5 V65 Z" fill="#000" fill-opacity="0.28" filter="url(#bl)"/><rect x="804.5" y="65.5" width="110" height="3.5" fill="url(#gt)"/><rect x="804.5" y="65.5" width="3.5" height="32" fill="url(#gl)"/><rect x="802.75" y="63.75" width="113.5" height="35.2" fill="none" stroke="#F00D0D" stroke-width="3.5"/>
</svg></body></html>
